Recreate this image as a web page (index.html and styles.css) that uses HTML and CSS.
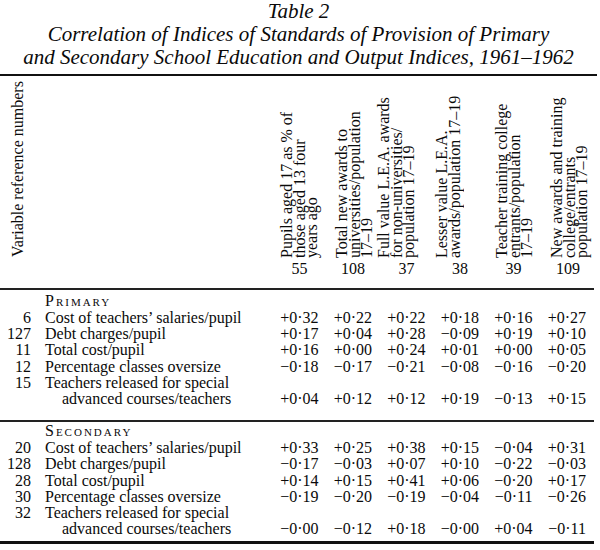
FILE: index.html
```html
<!DOCTYPE html>
<html lang="en">
<head>
<meta charset="utf-8">
<title>Table 2</title>
<link rel="stylesheet" href="styles.css">
</head>
<body>
<div class="page">
  <div class="caption">
    <div>Table 2</div>
    <div>Correlation of Indices of Standards of Provision of Primary</div>
    <div>and Secondary School Education and Output Indices, 1961–1962</div>
  </div>
  <table class="data">
    <colgroup>
      <col class="c-ref"><col class="c-label">
      <col class="c-val"><col class="c-val"><col class="c-val"><col class="c-val"><col class="c-val"><col class="c-last">
    </colgroup>
    <thead>
      <tr>
        <th class="h-ref"><div class="rot rot-ref">Variable reference numbers</div></th>
        <th class="h-blank"></th>
        <th class="h-col"><div class="rot h1">Pupils aged 17 as % of<br>those aged 13 four<br>years ago</div><div class="num">55</div></th>
        <th class="h-col"><div class="rot h2">Total new awards to<br>universities/population<br>17–19</div><div class="num">108</div></th>
        <th class="h-col"><div class="rot h3">Full value L.E.A. awards<br>for non-universities/<br>population 17–19</div><div class="num">37</div></th>
        <th class="h-col"><div class="rot h4">Lesser value L.E.A.<br>awards/population 17–19</div><div class="num">38</div></th>
        <th class="h-col"><div class="rot h5">Teacher training college<br>entrants/population<br>17–19</div><div class="num">39</div></th>
        <th class="h-col last"><div class="rot h6">New awards and training<br>college/entrants<br>population 17–19</div><div class="num">109</div></th>
      </tr>
    </thead>
    <tbody class="sec sec-primary">
      <tr class="sec-title"><td></td><td colspan="7">Primary</td></tr>
      <tr><td class="ref">6</td><td class="lbl">Cost of teachers’ salaries/pupil</td><td>+0·32</td><td>+0·22</td><td>+0·22</td><td>+0·18</td><td>+0·16</td><td class="last">+0·27</td></tr>
      <tr><td class="ref">127</td><td class="lbl">Debt charges/pupil</td><td>+0·17</td><td>+0·04</td><td>+0·28</td><td>−0·09</td><td>+0·19</td><td class="last">+0·10</td></tr>
      <tr><td class="ref">11</td><td class="lbl">Total cost/pupil</td><td>+0·16</td><td>+0·00</td><td>+0·24</td><td>+0·01</td><td>+0·00</td><td class="last">+0·05</td></tr>
      <tr><td class="ref">12</td><td class="lbl">Percentage classes oversize</td><td>−0·18</td><td>−0·17</td><td>−0·21</td><td>−0·08</td><td>−0·16</td><td class="last">−0·20</td></tr>
      <tr class="two end"><td class="ref">15</td><td class="lbl">Teachers released for special<span class="cont">advanced courses/teachers</span></td><td>+0·04</td><td>+0·12</td><td>+0·12</td><td>+0·19</td><td>−0·13</td><td class="last">+0·15</td></tr>
    </tbody>
    <tbody class="sec sec-secondary">
      <tr class="sec-title"><td></td><td colspan="7">Secondary</td></tr>
      <tr><td class="ref">20</td><td class="lbl">Cost of teachers’ salaries/pupil</td><td>+0·33</td><td>+0·25</td><td>+0·38</td><td>+0·15</td><td>−0·04</td><td class="last">+0·31</td></tr>
      <tr><td class="ref">128</td><td class="lbl">Debt charges/pupil</td><td>−0·17</td><td>−0·03</td><td>+0·07</td><td>+0·10</td><td>−0·22</td><td class="last">−0·03</td></tr>
      <tr><td class="ref">28</td><td class="lbl">Total cost/pupil</td><td>+0·14</td><td>+0·15</td><td>+0·41</td><td>+0·06</td><td>−0·20</td><td class="last">+0·17</td></tr>
      <tr><td class="ref">30</td><td class="lbl">Percentage classes oversize</td><td>−0·19</td><td>−0·20</td><td>−0·19</td><td>−0·04</td><td>−0·11</td><td class="last">−0·26</td></tr>
      <tr class="two end"><td class="ref">32</td><td class="lbl">Teachers released for special<span class="cont">advanced courses/teachers</span></td><td>−0·00</td><td>−0·12</td><td>+0·18</td><td>−0·00</td><td>+0·04</td><td class="last">−0·11</td></tr>
    </tbody>
  </table>
</div>
</body>
</html>
```
FILE: styles.css
```css
html, body {
  margin: 0;
  padding: 0;
  background: #fff;
}

body {
  font-family: "Liberation Serif", "Times New Roman", serif;
  color: #0a0a0a;
  font-size: 16px;
}

.page {
  width: 597px;
}

.caption {
  font-style: italic;
  font-size: 21px;
  line-height: 23px;
  text-align: center;
  padding-bottom: 5px;
  border-bottom: 2px solid #111;
}

.data {
  width: 594px;
  border-collapse: separate;
  border-spacing: 0;
  table-layout: fixed;
  line-height: 16.25px;
}

.c-ref { width: 36px; }
.c-label { width: 229px; }
.c-val { width: 53.5px; }
.c-last { width: 61.5px; }

.data th,
.data td {
  padding: 0;
  text-align: right;
  vertical-align: bottom;
  white-space: nowrap;
  font-weight: normal;
}

/* header */
.data thead th {
  border-bottom: 2px solid #222;
}

.data th.h-ref {
  text-align: left;
  padding: 0 0 31px 10px;
}

.rot {
  writing-mode: vertical-rl;
  transform: rotate(180deg);
  text-align: left;
  line-height: 12.5px;
}

.rot-ref {
  line-height: 16px;
  height: 172px;
}

.data th.h-col {
  padding: 9px 0 10.75px 0;
}

.h-col .rot {
  height: 173px;
  margin-bottom: 3px;
}

.h1 { margin-left: 16px; }
.h2 { margin-left: 17px; }
.h3 { margin-left: 6px; }
.h4 { margin-left: 10px; }
.h5 { margin-left: 17px; }
.h6 { margin-left: 18px; }

.num {
  text-align: center;
  width: 38px;
  margin-left: auto;
  padding-left: 4px;
}

.h-col.last .num {
  margin-right: 7px;
}

/* body */
.data td.last {
  padding-right: 8px;
}

.data td.ref {
  padding-right: 5px;
}

.data tr.two td.ref {
  vertical-align: top;
}

.data td.lbl {
  text-align: left;
  padding-left: 9px;
}

.cont {
  display: block;
  padding-left: 17px;
}

.data .sec-title td {
  text-align: left;
  padding: 2.5px 0 1px 9px;
  font-variant: small-caps;
  letter-spacing: 2px;
}

.data .sec-secondary .sec-title td {
  padding-top: 1.5px;
  padding-bottom: 0.75px;
}

.data .sec-primary tr.end td {
  padding-bottom: 12.25px;
  border-bottom: 2px solid #222;
}

.data .sec-secondary tr.end td {
  padding-bottom: 3px;
  border-bottom: 3px solid #111;
}

.data tr.end td.ref {
  padding-bottom: 0;
}
```
